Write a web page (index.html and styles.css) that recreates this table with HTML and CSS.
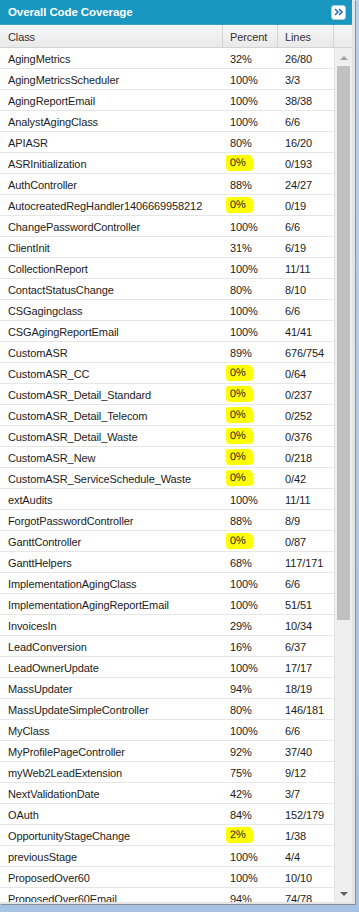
FILE: index.html
```html
<!DOCTYPE html>
<html>
<head>
<meta charset="utf-8">
<title>Overall Code Coverage</title>
<link rel="stylesheet" href="styles.css">
</head>
<body>
<div class="window">
  <div class="titlebar">
    <span class="title">Overall Code Coverage</span>
    <span class="expand"><svg width="10" height="8" viewBox="0 0 10 8"><path d="M1 1 L4 4 L1 7 M5 1 L8 4 L5 7" fill="none" stroke="#2a6fb5" stroke-width="1.6"/></svg></span>
  </div>
  <div class="grid">
    <div class="table">
      <div class="row head">
        <div class="c1">Class</div><div class="c2">Percent</div><div class="c3">Lines</div>
      </div>
      <div class="row"><div class="c1">AgingMetrics</div><div class="c2">32%</div><div class="c3">26/80</div></div>
      <div class="row"><div class="c1">AgingMetricsScheduler</div><div class="c2">100%</div><div class="c3">3/3</div></div>
      <div class="row"><div class="c1">AgingReportEmail</div><div class="c2">100%</div><div class="c3">38/38</div></div>
      <div class="row"><div class="c1">AnalystAgingClass</div><div class="c2">100%</div><div class="c3">6/6</div></div>
      <div class="row"><div class="c1">APIASR</div><div class="c2">80%</div><div class="c3">16/20</div></div>
      <div class="row"><div class="c1">ASRInitialization</div><div class="c2"><span class="hl">0%</span></div><div class="c3">0/193</div></div>
      <div class="row"><div class="c1">AuthController</div><div class="c2">88%</div><div class="c3">24/27</div></div>
      <div class="row"><div class="c1">AutocreatedRegHandler1406669958212</div><div class="c2"><span class="hl">0%</span></div><div class="c3">0/19</div></div>
      <div class="row"><div class="c1">ChangePasswordController</div><div class="c2">100%</div><div class="c3">6/6</div></div>
      <div class="row"><div class="c1">ClientInit</div><div class="c2">31%</div><div class="c3">6/19</div></div>
      <div class="row"><div class="c1">CollectionReport</div><div class="c2">100%</div><div class="c3">11/11</div></div>
      <div class="row"><div class="c1">ContactStatusChange</div><div class="c2">80%</div><div class="c3">8/10</div></div>
      <div class="row"><div class="c1">CSGagingclass</div><div class="c2">100%</div><div class="c3">6/6</div></div>
      <div class="row"><div class="c1">CSGAgingReportEmail</div><div class="c2">100%</div><div class="c3">41/41</div></div>
      <div class="row"><div class="c1">CustomASR</div><div class="c2">89%</div><div class="c3">676/754</div></div>
      <div class="row"><div class="c1">CustomASR_CC</div><div class="c2"><span class="hl">0%</span></div><div class="c3">0/64</div></div>
      <div class="row"><div class="c1">CustomASR_Detail_Standard</div><div class="c2"><span class="hl">0%</span></div><div class="c3">0/237</div></div>
      <div class="row"><div class="c1">CustomASR_Detail_Telecom</div><div class="c2"><span class="hl">0%</span></div><div class="c3">0/252</div></div>
      <div class="row"><div class="c1">CustomASR_Detail_Waste</div><div class="c2"><span class="hl">0%</span></div><div class="c3">0/376</div></div>
      <div class="row"><div class="c1">CustomASR_New</div><div class="c2"><span class="hl">0%</span></div><div class="c3">0/218</div></div>
      <div class="row"><div class="c1">CustomASR_ServiceSchedule_Waste</div><div class="c2"><span class="hl">0%</span></div><div class="c3">0/42</div></div>
      <div class="row"><div class="c1">extAudits</div><div class="c2">100%</div><div class="c3">11/11</div></div>
      <div class="row"><div class="c1">ForgotPasswordController</div><div class="c2">88%</div><div class="c3">8/9</div></div>
      <div class="row"><div class="c1">GanttController</div><div class="c2"><span class="hl">0%</span></div><div class="c3">0/87</div></div>
      <div class="row"><div class="c1">GanttHelpers</div><div class="c2">68%</div><div class="c3">117/171</div></div>
      <div class="row"><div class="c1">ImplementationAgingClass</div><div class="c2">100%</div><div class="c3">6/6</div></div>
      <div class="row"><div class="c1">ImplementationAgingReportEmail</div><div class="c2">100%</div><div class="c3">51/51</div></div>
      <div class="row"><div class="c1">InvoicesIn</div><div class="c2">29%</div><div class="c3">10/34</div></div>
      <div class="row"><div class="c1">LeadConversion</div><div class="c2">16%</div><div class="c3">6/37</div></div>
      <div class="row"><div class="c1">LeadOwnerUpdate</div><div class="c2">100%</div><div class="c3">17/17</div></div>
      <div class="row"><div class="c1">MassUpdater</div><div class="c2">94%</div><div class="c3">18/19</div></div>
      <div class="row"><div class="c1">MassUpdateSimpleController</div><div class="c2">80%</div><div class="c3">146/181</div></div>
      <div class="row"><div class="c1">MyClass</div><div class="c2">100%</div><div class="c3">6/6</div></div>
      <div class="row"><div class="c1">MyProfilePageController</div><div class="c2">92%</div><div class="c3">37/40</div></div>
      <div class="row"><div class="c1">myWeb2LeadExtension</div><div class="c2">75%</div><div class="c3">9/12</div></div>
      <div class="row"><div class="c1">NextValidationDate</div><div class="c2">42%</div><div class="c3">3/7</div></div>
      <div class="row"><div class="c1">OAuth</div><div class="c2">84%</div><div class="c3">152/179</div></div>
      <div class="row"><div class="c1">OpportunityStageChange</div><div class="c2"><span class="hl">2%</span></div><div class="c3">1/38</div></div>
      <div class="row"><div class="c1">previousStage</div><div class="c2">100%</div><div class="c3">4/4</div></div>
      <div class="row"><div class="c1">ProposedOver60</div><div class="c2">100%</div><div class="c3">10/10</div></div>
      <div class="row"><div class="c1">ProposedOver60Email</div><div class="c2">94%</div><div class="c3">74/78</div></div>
    </div>
    <div class="side">
      <div class="side-head"></div>
      <div class="scrollbar">
        <div class="arrow up"></div>
        <div class="thumb"></div>
        <div class="track"></div>
        <div class="arrow down"></div>
      </div>
    </div>
  </div>
</div>
</body>
</html>
```
FILE: styles.css
```css
html, body {
  margin: 0;
  padding: 0;
}
body {
  width: 359px;
  height: 912px;
  overflow: hidden;
  background: linear-gradient(180deg, #b9d1ea 0%, #a6c3e4 100%);
  font-family: "Liberation Sans", Arial, sans-serif;
  font-size: 11px;
  color: #1c1c1c;
}
.window {
  width: 352px;
  height: 902px;
  background: #fff;
  border-right: 3px solid #e4e4e4;
  border-bottom: 2px solid #e4e4e4;
  box-shadow: 1px 1px 0 #8a8f96;
  overflow: hidden;
  display: flex;
  flex-direction: column;
}
.titlebar {
  height: 25px;
  flex: none;
  background: #1997c1;
  display: flex;
  align-items: center;
  justify-content: space-between;
  padding: 0 6px 0 8px;
  border-bottom: 1px solid #3f9ec4;
  box-sizing: border-box;
}
.title {
  color: #fff;
  font-weight: bold;
  font-size: 11.5px;
  letter-spacing: -0.1px;
}
.expand {
  width: 13px;
  height: 13px;
  background: #fff;
  border: 1px solid #a9cde6;
  border-radius: 3px;
  display: flex;
  align-items: center;
  justify-content: center;
}
.grid {
  flex: 1;
  display: flex;
  min-height: 0;
}
.table {
  width: 334px;
  flex: none;
}
.row {
  display: flex;
  height: 21px;
  box-sizing: border-box;
  padding-top: 1px;
  border-bottom: 1px solid #e6e6e6;
  align-items: center;
  background: #fff;
  letter-spacing: -0.1px;
}
.row > div {
  box-sizing: border-box;
  white-space: nowrap;
}
.c1 {
  width: 223px;
  padding-left: 8px;
}
.c2 {
  width: 55px;
  padding-left: 7px;
}
.c3 {
  width: 56px;
  padding-left: 7px;
}
.row.head {
  height: 23px;
  padding-top: 0;
  background: linear-gradient(180deg, #f7f7f7 0%, #e9e9ea 100%);
  border-bottom: 1px solid #d3d3d3;
  color: #333;
}
.row.head > div {
  height: 100%;
  display: flex;
  align-items: center;
  padding-top: 1px;
  border-right: 1px solid #d3d3d3;
}
.hl {
  display: inline-block;
  background: #ffff00;
  line-height: 13px;
  padding: 1px 7px 2px 4px;
  margin-left: -4px;
  margin-top: -2px;
  vertical-align: top;
  border-radius: 2px 5px 3px 4px;
  transform: rotate(-1.5deg);
}
.side {
  flex: 1;
  display: flex;
  flex-direction: column;
}
.side-head {
  height: 23px;
  flex: none;
  box-sizing: border-box;
  background: linear-gradient(180deg, #f7f7f7 0%, #e9e9ea 100%);
  border-bottom: 1px solid #d3d3d3;
}
.scrollbar {
  flex: 1;
  background: #efefef;
  border-left: 1px solid #e2e2e2;
  display: flex;
  flex-direction: column;
  align-items: center;
}
.arrow {
  width: 0;
  height: 0;
  border-left: 4px solid transparent;
  border-right: 4px solid transparent;
  flex: none;
}
.arrow.up {
  border-bottom: 4px solid #a3a3a3;
  margin-top: 8px;
}
.arrow.down {
  border-top: 4px solid #606060;
  margin-bottom: 6px;
}
.thumb {
  width: 13px;
  height: 554px;
  background: #c1c1c1;
  margin-top: 6px;
  flex: none;
}
.track {
  flex: 1;
}
```
